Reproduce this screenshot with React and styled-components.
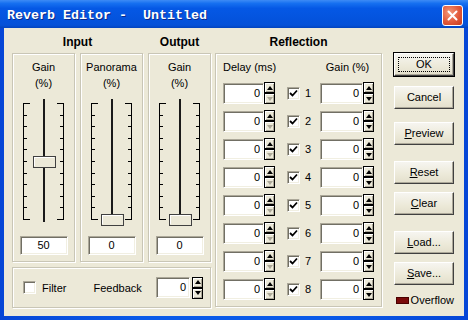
import React from 'react';
import styled, { createGlobalStyle } from 'styled-components';

const GlobalStyle = createGlobalStyle`
  html, body {
    margin: 0;
    padding: 0;
    background: #ffffff;
  }
  body {
    font-family: "Liberation Sans", Arial, sans-serif;
    font-size: 11px;
    color: #000000;
  }
`;

const Window = styled.div`
  width: 468px;
  height: 320px;
  display: flex;
  flex-direction: column;
  background: linear-gradient(to right, #0646d6, #0a5ae8 30%, #0a5ae8 70%, #0646d6);
  overflow: hidden;
`;

const TitleBar = styled.div`
  height: 28px;
  flex: none;
  display: flex;
  align-items: flex-start;
  justify-content: space-between;
  padding: 0 5px 0 7px;
  background: linear-gradient(to bottom, #3d8bf5 0%, #1670f0 12%, #0558e5 30%, #0453dd 70%, #0551d8 90%, #0344be 100%);
`;

const Title = styled.span`
  margin-top: 8px;
  font-family: "Liberation Mono", "Courier New", monospace;
  font-weight: bold;
  font-size: 13.33px;
  line-height: 16px;
  color: #ffffff;
  white-space: pre;
  text-shadow: 1px 1px 0 #0a2a8a;
`;

const CloseButton = styled.div`
  margin-top: 5px;
  width: 21px;
  height: 21px;
  box-sizing: border-box;
  border: 1px solid #ffffff;
  border-radius: 3px;
  background: radial-gradient(circle at 35% 35%, #f29a7c, #e2593a 55%, #c63b1c);
  display: flex;
  align-items: center;
  justify-content: center;
`;

const Body = styled.div`
  flex: 1;
  margin: 0 4px 4px;
  background: #ece9d8;
  display: flex;
  padding-left: 8px;
`;

const LeftColumn = styled.div`
  width: 199px;
  display: grid;
  grid-template-columns: repeat(3, 63px);
  grid-template-rows: 25px 209px 46px;
  column-gap: 5px;
`;

const Heading = styled.div`
  grid-column: span ${(p) => p.$span || 1};
  padding-top: 7px;
  line-height: 14px;
  text-align: center;
  font-weight: bold;
  font-size: 12px;
`;

const GroupBox = styled.div`
  box-sizing: border-box;
  border: 1px solid #c9c6b6;
  box-shadow: inset 1px 1px 0 #ffffff, 1px 1px 0 #ffffff;
`;

const SliderPanel = styled(GroupBox)`
  display: flex;
  flex-direction: column;
  align-items: center;
  padding-top: 5px;
`;

const SliderLabel = styled.div`
  height: 32px;
  line-height: 16px;
  text-align: center;
`;

const SliderSvg = styled.svg`
  display: block;
  margin-top: 5px;
  shape-rendering: crispEdges;
`;

const sunken = `
  background: #ffffff;
  border: 1px solid;
  border-color: #aca899 #ffffff #ffffff #aca899;
  box-shadow: inset 1px 1px 0 #716f64, inset -1px -1px 0 #f1efe2;
`;

const ValueBox = styled.div`
  ${sunken}
  box-sizing: border-box;
  margin-top: 10px;
  width: 48px;
  height: 19px;
  line-height: 17px;
  text-align: center;
`;

const OptionsGroup = styled(GroupBox)`
  grid-column: 1 / -1;
  margin-top: 5px;
  height: 41px;
  display: flex;
  align-items: center;
  padding: 0 7px 0 10px;
`;

const CheckBox = styled.span`
  ${sunken}
  box-sizing: border-box;
  flex: none;
  width: 13px;
  height: 13px;
  margin-left: ${(p) => p.$offset || 0}px;
  display: inline-flex;
  align-items: center;
  justify-content: center;
`;

const Caption = styled.span`
  margin-left: ${(p) => p.$offset || 0}px;
  white-space: nowrap;
`;

const SpinField = styled.div`
  display: flex;
  align-items: center;
  margin-left: ${(p) => (p.$push ? 'auto' : '0')};
`;

const EditBox = styled.div`
  ${sunken}
  box-sizing: border-box;
  width: ${(p) => p.$width}px;
  height: 21px;
  line-height: 19px;
  padding-right: 3px;
  text-align: right;
  margin-right: ${(p) => p.$gap || 0}px;
`;

const SpinStack = styled.div`
  display: flex;
  flex-direction: column;
`;

const SpinArrow = styled.div`
  box-sizing: border-box;
  width: 11px;
  height: 11px;
  border: 1px solid #000000;
  background: #ece9d8;
  box-shadow: inset 1px 1px 0 #ffffff, inset -1px -1px 0 #aca899;
  display: flex;
  align-items: center;
  justify-content: center;

  &::after {
    content: '';
    border-left: 3px solid transparent;
    border-right: 3px solid transparent;
    ${(p) => (p.$down ? 'border-top' : 'border-bottom')}: 4px solid
      ${(p) => (p.$disabled ? '#aca899' : '#000000')};
  }
`;

const ReflectionColumn = styled.div`
  width: 167px;
  margin-left: 4px;
  display: grid;
  grid-template-rows: 25px 254px;
`;

const ReflectionGroup = styled(GroupBox)`
  display: grid;
  grid-template-columns: 52px 45px 55px;
  grid-template-rows: 25px repeat(8, 28px);
  align-items: center;
  padding: 0 6px 0 7px;
`;

const ColumnHeader = styled.div`
  grid-column: ${(p) => p.$col};
  text-align: center;
  white-space: nowrap;
`;

const CheckCell = styled.div`
  display: flex;
  align-items: center;
`;

const ButtonColumn = styled.div`
  width: 60px;
  margin-left: 12px;
  padding-top: 25px;
  display: flex;
  flex-direction: column;
`;

const Button = styled.div`
  position: relative;
  box-sizing: border-box;
  height: 23px;
  margin-top: ${(p) => p.$gap || 0}px;
  background: linear-gradient(to bottom, #f6f5f0, #ece9d8 60%, #e3dfcc);
  border: 1px solid;
  border-color: #ffffff #404040 #404040 #ffffff;
  box-shadow: inset -1px -1px 0 #aca899;
  display: flex;
  align-items: center;
  justify-content: center;
  line-height: 13px;

  ${(p) =>
    p.$default &&
    `
    outline: 1px solid #000000;
    outline-offset: 0;
    &::after {
      content: '';
      position: absolute;
      inset: 3px;
      border: 1px dotted #000000;
    }
  `}
`;

const OverflowRow = styled.div`
  margin-top: 8px;
  height: 14px;
  display: flex;
  align-items: center;
  padding-left: 2px;
`;

const OverflowLamp = styled.span`
  width: 14px;
  height: 7px;
  background: #7a0a0a;
  border: 1px solid #4a0000;
  box-sizing: border-box;
  margin-right: 2px;
`;

const CheckMark = () => (
  <svg width="9" height="9" viewBox="0 0 9 9">
    <path d="M1 4 L3.5 6.5 L8 1.5" fill="none" stroke="#000" strokeWidth="1.8" />
  </svg>
);

const Spinner = ({ downDisabled }) => (
  <SpinStack>
    <SpinArrow />
    <SpinArrow $down $disabled={downDisabled} />
  </SpinStack>
);

const Slider = ({ value }) => {
  const ticks = Array.from({ length: 11 }, (_, i) => Math.round(7 + i * 11.6) + 0.5);
  const thumb = Math.round(7 + (1 - value / 100) * 116) - 5;
  return (
    <SliderSvg width="61" height="130" viewBox="0 0 61 130">
      <line x1="10.5" y1={ticks[0]} x2="10.5" y2={ticks[10]} stroke="#000" />
      <line x1="50.5" y1={ticks[0]} x2="50.5" y2={ticks[10]} stroke="#000" />
      {ticks.map((y, i) => {
        const cap = i === 0 || i === 10;
        return (
          <g key={y}>
            <line x1="10" y1={y} x2={cap ? 17 : 14} y2={y} stroke="#000" />
            <line x1={cap ? 44 : 47} y1={y} x2="51" y2={y} stroke="#000" />
          </g>
        );
      })}
      <rect x="30" y="3" width="2" height="123" fill="#1a1a1a" />
      <rect x="20" y={thumb} width="22" height="11" fill="#ece9d8" stroke="#404040" strokeWidth="1" />
      <line x1="21" y1={thumb + 1.5} x2="41" y2={thumb + 1.5} stroke="#fff" />
      <line x1="21.5" y1={thumb + 1} x2="21.5" y2={thumb + 10} stroke="#fff" />
    </SliderSvg>
  );
};

const sliders = [
  { label: 'Gain', value: 50 },
  { label: 'Panorama', value: 0 },
  { label: 'Gain', value: 0 },
];

const buttons = [
  { text: 'OK', gap: 0, def: true },
  { text: 'Cancel', gap: 10 },
  { key: 'P', rest: 'review', gap: 13 },
  { key: 'R', rest: 'eset', gap: 16 },
  { key: 'C', rest: 'lear', gap: 8 },
  { key: 'L', rest: 'oad...', gap: 16 },
  { key: 'S', rest: 'ave...', gap: 8 },
];

const App = () => {
  return (
    <Window>
      <GlobalStyle />
      <TitleBar>
        <Title>Reverb Editor -  Untitled</Title>
        <CloseButton>
          <svg width="11" height="11" viewBox="0 0 11 11">
            <path d="M1.5 1.5 L9.5 9.5 M9.5 1.5 L1.5 9.5" stroke="#fff" strokeWidth="2" strokeLinecap="round" />
          </svg>
        </CloseButton>
      </TitleBar>

      <Body>
        <LeftColumn>
          <Heading $span={2}>Input</Heading>
          <Heading>Output</Heading>
          {sliders.map((s, i) => (
            <SliderPanel key={i}>
              <SliderLabel>
                {s.label}
                <br />
                (%)
              </SliderLabel>
              <Slider value={s.value} />
              <ValueBox>{s.value}</ValueBox>
            </SliderPanel>
          ))}
          <OptionsGroup>
            <CheckBox />
            <Caption $offset={6}>Filter</Caption>
            <Caption $offset={27}>Feedback</Caption>
            <SpinField $push>
              <EditBox $width={34} $gap={2}>0</EditBox>
              <Spinner />
            </SpinField>
          </OptionsGroup>
        </LeftColumn>

        <ReflectionColumn>
          <Heading>Reflection</Heading>
          <ReflectionGroup>
            <ColumnHeader $col={1}>Delay (ms)</ColumnHeader>
            <ColumnHeader $col={3}>Gain (%)</ColumnHeader>
            {[1, 2, 3, 4, 5, 6, 7, 8].map((n) => (
              <React.Fragment key={n}>
                <SpinField>
                  <EditBox $width={41}>0</EditBox>
                  <Spinner downDisabled />
                </SpinField>
                <CheckCell>
                  <CheckBox $offset={12}>
                    <CheckMark />
                  </CheckBox>
                  <Caption $offset={5}>{n}</Caption>
                </CheckCell>
                <SpinField>
                  <EditBox $width={43}>0</EditBox>
                  <Spinner />
                </SpinField>
              </React.Fragment>
            ))}
          </ReflectionGroup>
        </ReflectionColumn>

        <ButtonColumn>
          {buttons.map((b, i) => (
            <Button key={i} $gap={b.gap} $default={b.def}>
              {b.text ? (
                b.text
              ) : (
                <span>
                  <u>{b.key}</u>
                  {b.rest}
                </span>
              )}
            </Button>
          ))}
          <OverflowRow>
            <OverflowLamp />
            <span>Overflow</span>
          </OverflowRow>
        </ButtonColumn>
      </Body>
    </Window>
  );
};

export default App;
